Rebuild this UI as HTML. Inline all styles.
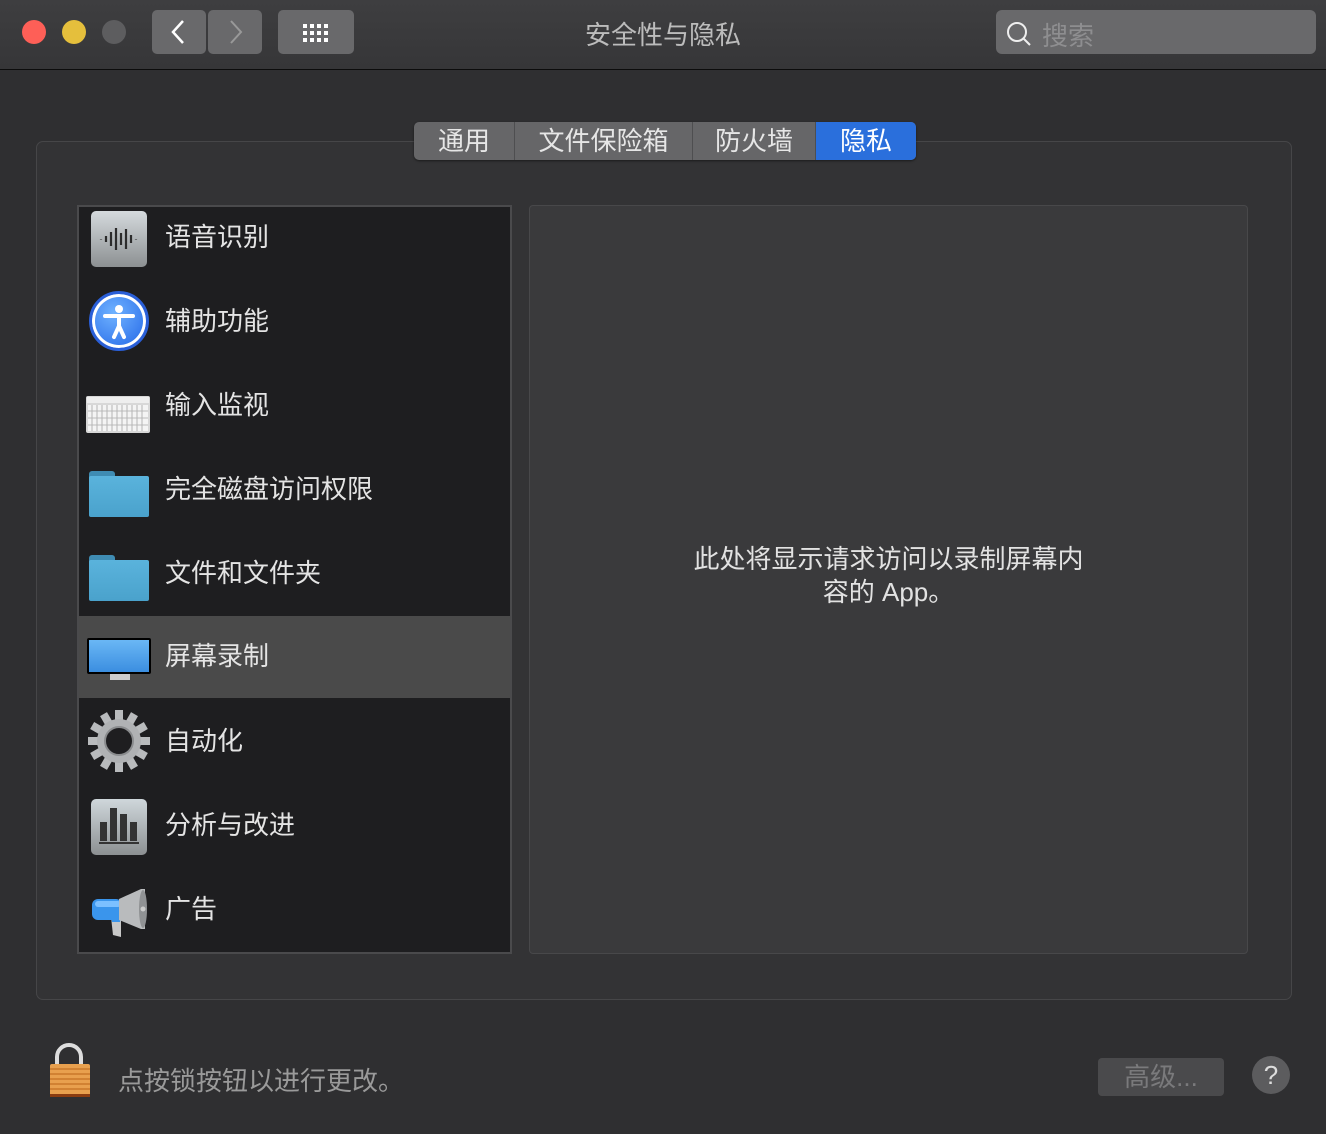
<!DOCTYPE html>
<html><head><meta charset="utf-8"><style>
*{margin:0;padding:0;box-sizing:border-box}
body{width:1326px;height:1134px;background:#2f2f31;font-family:"Liberation Sans","Noto Sans CJK SC",sans-serif;position:relative;overflow:hidden;color:#ddd}
.abs{position:absolute}
#tb{left:0;top:0;width:1326px;height:70px;background:linear-gradient(#3e3e40,#363638);border-bottom:1px solid #0c0c0c}
.dot{width:24px;height:24px;border-radius:50%;top:20px}
.btn{background:#69696b;border-radius:5px;top:10px;height:44px}
#group{left:36px;top:141px;width:1256px;height:859px;border:1px solid #464648;border-radius:7px;background:#333335}
#tabs{left:414px;top:122px;height:38px;width:502px;border-radius:5px;overflow:hidden;display:flex;background:#666668;box-shadow:0 1px 2px rgba(0,0,0,.5)}
#tabs div{font-size:26px;line-height:38px;text-align:center;color:#e6e6e6;border-right:1px solid #4e4e50}
#list{left:77px;top:205px;width:435px;height:749px;background:#1e1e20;border:2px solid #4a4a4c;overflow:hidden}
.row{position:absolute;left:0;width:431px;height:84px}
.row .t{position:absolute;left:86px;top:0;line-height:84px;font-size:26px;color:#e4e4e4}
.row .ic{position:absolute;left:8px;top:12px;width:64px;height:60px}
#panel{left:529px;top:205px;width:719px;height:749px;background:#3a3a3c;border:1px solid #48484a;border-radius:4px}
</style></head><body>
<div id="tb" class="abs">
<div class="abs dot" style="left:22px;background:#fe5f57"></div>
<div class="abs dot" style="left:62px;background:#e5bf3c"></div>
<div class="abs dot" style="left:102px;background:#5d5d5f"></div>
<div class="abs btn" style="left:152px;width:54px"><svg width="54" height="44"><path d="M31 11 L21 22 L31 33" stroke="#fff" stroke-width="2.5" fill="none"/></svg></div>
<div class="abs btn" style="left:208px;width:54px"><svg width="54" height="44"><path d="M23 11 L33 22 L23 33" stroke="#999" stroke-width="2" fill="none"/></svg></div>
<div class="abs btn" style="left:278px;width:76px"><svg width="76" height="44"><g fill="#fff"><rect x="25" y="14" width="4" height="4"/><rect x="32" y="14" width="4" height="4"/><rect x="39" y="14" width="4" height="4"/><rect x="46" y="14" width="4" height="4"/><rect x="25" y="21" width="4" height="4"/><rect x="32" y="21" width="4" height="4"/><rect x="39" y="21" width="4" height="4"/><rect x="46" y="21" width="4" height="4"/><rect x="25" y="28" width="4" height="4"/><rect x="32" y="28" width="4" height="4"/><rect x="39" y="28" width="4" height="4"/><rect x="46" y="28" width="4" height="4"/></g></svg></div>
<div class="abs" style="left:0;width:1326px;top:15px;text-align:center;font-size:26px;color:#bcbcbc">安全性与隐私</div>
<div class="abs" style="left:996px;top:10px;width:320px;height:44px;background:#69696b;border-radius:6px">
<svg class="abs" style="left:8px;top:10px" width="30" height="30"><circle cx="13" cy="12" r="9" stroke="#eee" stroke-width="2" fill="none"/><path d="M19.5 18.5 L26 25" stroke="#eee" stroke-width="2"/></svg>
<div class="abs" style="left:46px;top:6px;font-size:26px;color:#8e8e90">搜索</div></div>
</div>
<div id="group" class="abs"></div>
<div id="tabs" class="abs">
<div style="width:101px">通用</div><div style="width:178px">文件保险箱</div><div style="width:123px">防火墙</div><div style="width:100px;background:#2a6fdc;color:#fff;border:none">隐私</div>
</div>
<div id="list" class="abs">
<div class="row" style="top:-12px"><div class="ic" style="left:12px;top:16px;width:56px;height:56px;border-radius:5px;background:linear-gradient(#d5dadd,#8c9092)"><svg width="56" height="56"><g stroke="#2c2c2c" stroke-width="2.2"><path d="M10 28v0.5M15 25v6M20 21v14M25 17v22M30 22v12M35 18v20M40 24v8M45 28v0.5"/></g></svg></div><div class="t">语音识别</div></div>
<div class="row" style="top:72px"><div class="ic" style="left:10px;top:12px;width:60px;height:60px;border-radius:50%;background:radial-gradient(circle at 40% 35%,#6fb2ff,#1f63e6);border:3px solid #2a5fd8;box-shadow:inset 0 0 0 3px #fff"><svg width="54" height="54"><circle cx="27" cy="15" r="4" fill="#fff"/><path d="M13 22 L41 22 M27 22 L27 32 M27 32 L22 43 M27 32 L32 43" stroke="#fff" stroke-width="4" fill="none" stroke-linecap="round"/></svg></div><div class="t">辅助功能</div></div>
<div class="row" style="top:156px"><div class="ic" style="left:7px;top:33px;width:64px;height:37px"><svg width="64" height="37"><rect x="0" y="0" width="64" height="37" rx="2" fill="#d8d8d8"/><rect x="1" y="1" width="62" height="6" fill="#eee"/><g fill="#f4f4f4"><rect x="2" y="9" width="60" height="5"/><rect x="2" y="16" width="60" height="5"/><rect x="2" y="23" width="60" height="5"/><rect x="2" y="30" width="60" height="5"/></g><g stroke="#b5b5b5" stroke-width="1"><path d="M6 9v26M11 9v26M16 9v26M21 9v26M26 9v26M31 9v26M36 9v26M41 9v26M46 9v26M51 9v26M56 9v26"/></g></svg></div><div class="t">输入监视</div></div>
<div class="row" style="top:240px"><div class="ic" style="left:10px;top:24px;width:60px;height:46px"><div class="abs" style="left:0;top:0;width:26px;height:8px;background:#3f8cb3;border-radius:3px 3px 0 0"></div><div class="abs" style="left:0;top:5px;width:60px;height:41px;background:linear-gradient(#5ab3dc,#4aa2cc);border-radius:2px"></div></div><div class="t">完全磁盘访问权限</div></div>
<div class="row" style="top:324px"><div class="ic" style="left:10px;top:24px;width:60px;height:46px"><div class="abs" style="left:0;top:0;width:26px;height:8px;background:#3f8cb3;border-radius:3px 3px 0 0"></div><div class="abs" style="left:0;top:5px;width:60px;height:41px;background:linear-gradient(#5ab3dc,#4aa2cc);border-radius:2px"></div></div><div class="t">文件和文件夹</div></div>
<div class="row" style="top:409px;height:82px;background:#4a4a4a"><div class="ic" style="left:8px;top:22px;width:64px;height:36px;background:linear-gradient(#6ab7f5,#3b8ee0);border:2px solid #000;border-radius:2px"></div><div class="abs" style="left:31px;top:58px;width:20px;height:6px;background:#ccc"></div><div class="t" style="line-height:80px">屏幕录制</div></div>
<div class="row" style="top:492px"><div class="ic" style="left:8px;top:10px;width:64px;height:64px"><svg width="64" height="64" viewBox="-32 -32 64 64"><g fill="#b9bbbd"><rect x="-4" y="-31" width="8" height="12"/><rect x="-4" y="-31" width="8" height="12" transform="rotate(30)"/><rect x="-4" y="-31" width="8" height="12" transform="rotate(60)"/><rect x="-4" y="-31" width="8" height="12" transform="rotate(90)"/><rect x="-4" y="-31" width="8" height="12" transform="rotate(120)"/><rect x="-4" y="-31" width="8" height="12" transform="rotate(150)"/><rect x="-4" y="-31" width="8" height="12" transform="rotate(180)"/><rect x="-4" y="-31" width="8" height="12" transform="rotate(210)"/><rect x="-4" y="-31" width="8" height="12" transform="rotate(240)"/><rect x="-4" y="-31" width="8" height="12" transform="rotate(270)"/><rect x="-4" y="-31" width="8" height="12" transform="rotate(300)"/><rect x="-4" y="-31" width="8" height="12" transform="rotate(330)"/></g><circle r="22" fill="#b0b2b4"/><circle r="14" fill="#1e1e20" stroke="#8a8c8e" stroke-width="2"/></svg></div><div class="t">自动化</div></div>
<div class="row" style="top:576px"><div class="ic" style="left:12px;top:16px;width:56px;height:56px;border-radius:5px;background:linear-gradient(#cfd7db,#8c9092)"><svg width="56" height="56"><g fill="#333"><rect x="9" y="23" width="7" height="19"/><rect x="19" y="9" width="7" height="33"/><rect x="29" y="15" width="7" height="27"/><rect x="39" y="23" width="7" height="19"/><rect x="8" y="43" width="40" height="2"/></g></svg></div><div class="t">分析与改进</div></div>
<div class="row" style="top:660px"><div class="ic" style="left:12px;top:22px;width:58px;height:50px"><svg width="58" height="50"><path d="M20 28 L30 28 L30 48 L22 46 Z" fill="#c8c8c8"/><path d="M20 28 L30 28 L29 33 L21 33 Z" fill="#3a95ec"/><rect x="1" y="10" width="30" height="21" rx="6" fill="#3a95ec"/><rect x="4" y="12" width="26" height="6" rx="3" fill="#7cc0ff"/><path d="M28 10 L50 0 L54 0 L54 40 L50 40 L28 31 Z" fill="#b9bbbd"/><ellipse cx="52" cy="20" rx="4" ry="19" fill="#909294"/><circle cx="52" cy="20" r="2.5" fill="#ccc"/></svg></div><div class="t">广告</div></div>
</div>
<div id="panel" class="abs"><div class="abs" style="left:0;width:717px;top:337px;text-align:center;font-size:26px;line-height:33px;color:#e2e2e2">此处将显示请求访问以录制屏幕内<br>容的 App。</div></div>
<div class="abs" style="left:47px;top:1043px;width:46px;height:56px"><svg width="46" height="56"><path d="M10 22 V14 A12 12 0 0 1 34 14 V22" stroke="#ddd" stroke-width="4" fill="none"/><rect x="3" y="21" width="40" height="32" rx="2" fill="#e8a04e"/><g stroke="#c9782a" stroke-width="1.5"><path d="M3 26h40M3 31h40M3 36h40M3 41h40M3 46h40"/></g><rect x="3" y="51" width="40" height="3" fill="#8a3c10"/></svg></div>
<div class="abs" style="left:118px;top:1061px;font-size:26px;color:#9a9a9a">点按锁按钮以进行更改。</div>
<div class="abs" style="left:1098px;top:1058px;width:126px;height:38px;background:#4a4a4c;border-radius:4px;text-align:center;font-size:26px;line-height:38px;color:#7a7a7c">高级...</div>
<div class="abs" style="left:1252px;top:1056px;width:38px;height:38px;border-radius:50%;background:#5c5c5e;text-align:center;font-size:26px;line-height:38px;color:#ddd">?</div>
</body></html>
